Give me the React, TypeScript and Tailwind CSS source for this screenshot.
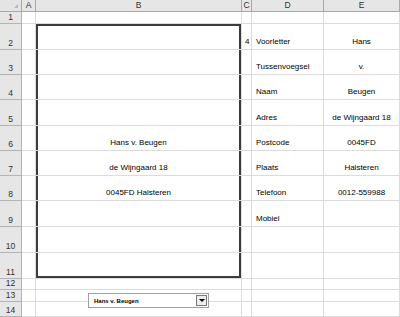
const cols = [
  { key: "A", w: "w-[14px]" },
  { key: "B", w: "w-[206px]" },
  { key: "C", w: "w-[10px]" },
  { key: "D", w: "w-[72px]" },
  { key: "E", w: "w-[76px]" },
];

type Row = { n: number; h: string; b?: string; c?: string; d?: string; e?: string };

const rows: Row[] = [
  { n: 1, h: "h-[12px]" },
  { n: 2, h: "h-[26px]", c: "4", d: "Voorletter", e: "Hans" },
  { n: 3, h: "h-[25px]", d: "Tussenvoegsel", e: "v." },
  { n: 4, h: "h-[25px]", d: "Naam", e: "Beugen" },
  { n: 5, h: "h-[26px]", d: "Adres", e: "de Wijngaard 18" },
  { n: 6, h: "h-[25px]", b: "Hans v. Beugen", d: "Postcode", e: "0045FD" },
  { n: 7, h: "h-[25px]", b: "de Wijngaard 18", d: "Plaats", e: "Halsteren" },
  { n: 8, h: "h-[25px]", b: "0045FD Halsteren", d: "Telefoon", e: "0012-559988" },
  { n: 9, h: "h-[26px]", d: "Mobiel" },
  { n: 10, h: "h-[26px]" },
  { n: 11, h: "h-[26px]" },
  { n: 12, h: "h-[11px]" },
  { n: 13, h: "h-[12px]" },
  { n: 14, h: "h-[15px]" },
];

function boxEdge(n: number) {
  if (n === 2) return "shadow-[inset_2px_0_0_#3c3c3c,inset_-2px_0_0_#3c3c3c,inset_0_2px_0_#3c3c3c]";
  if (n === 11) return "shadow-[inset_2px_0_0_#3c3c3c,inset_-2px_0_0_#3c3c3c,inset_0_-2px_0_#3c3c3c]";
  if (n > 2 && n < 11) return "shadow-[inset_2px_0_0_#3c3c3c,inset_-2px_0_0_#3c3c3c]";
  return "";
}

export default function App() {
  return (
    <div className="relative w-[400px] h-[317px] overflow-hidden bg-white font-['Liberation_Sans',Arial,sans-serif] text-[8px] leading-[9px] text-black">
      {/* column headers */}
      <div className="flex h-[12px] text-[8.5px]">
        <div className="relative w-[22px] shrink-0 bg-[#e4e4e4] border-r border-b border-[#a8a8a8]">
          <div className="absolute right-[3px] bottom-[3px] w-0 h-0 border-l-[4px] border-l-transparent border-b-[4px] border-b-[#b8b8b8]" />
        </div>
        {cols.map((c) => (
          <div
            key={c.key}
            className={`${c.w} shrink-0 flex items-center justify-center bg-[#e6e6e6] border-r border-b border-[#a8a8a8] text-[#333]`}
          >
            {c.key}
          </div>
        ))}
      </div>

      {rows.map((r) => (
        <div key={r.n} className={`flex ${r.h}`}>
          <div className="w-[22px] shrink-0 flex items-end justify-center pb-[1px] text-[8.5px] bg-[#e6e6e6] border-r border-b border-[#b4b4b4] text-[#333]">
            {r.n}
          </div>
          <div className="w-[14px] shrink-0 border-r border-b border-[#dcdcdc]" />
          <div className={`w-[206px] shrink-0 flex items-end justify-center pb-[3px] border-r border-b border-[#dcdcdc] ${boxEdge(r.n)}`}>
            {r.b}
          </div>
          <div className="w-[10px] shrink-0 flex items-end justify-start pl-[3px] pb-[3px] border-r border-b border-[#dcdcdc]">
            {r.c}
          </div>
          <div className="w-[72px] shrink-0 flex items-end pl-[4px] pb-[3px] whitespace-nowrap border-r border-b border-[#dcdcdc]">
            {r.d}
          </div>
          <div className="w-[76px] shrink-0 flex items-end justify-center pb-[3px] whitespace-nowrap border-r border-b border-[#dcdcdc]">
            {r.e}
          </div>
        </div>
      ))}

      {/* combo box control */}
      <div className="absolute left-[88px] top-[293px] w-[121px] h-[15px] flex items-center bg-white border border-[#a0a0a0]">
        <span className="pl-[5px] text-[6px] font-bold leading-none grow">Hans v. Beugen</span>
        <div className="w-[11px] h-[11px] mr-[1px] flex items-center justify-center bg-[#ececec] border border-[#7a7a7a]">
          <div className="w-0 h-0 border-l-[3px] border-r-[3px] border-t-[3px] border-l-transparent border-r-transparent border-t-black" />
        </div>
      </div>
    </div>
  );
}
